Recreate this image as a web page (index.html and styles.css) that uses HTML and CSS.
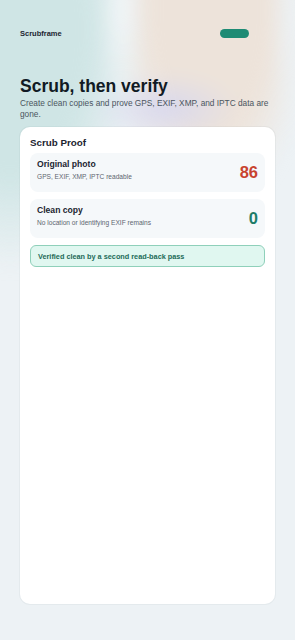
FILE: index.html
```html
<!DOCTYPE html>
<html lang="en">
<head>
  <meta charset="UTF-8">
  <meta name="viewport" content="width=device-width, initial-scale=1.0">
  <title>Scrubframe</title>
  <link rel="stylesheet" href="styles.css">
</head>
<body>
  <div class="backdrop"></div>
  <div class="app">
    <header class="top-bar">
      <span class="brand">Scrubframe</span>
      <span class="status-pill"></span>
    </header>

    <section class="hero">
      <h1>Scrub, then verify</h1>
      <p>Create clean copies and prove GPS, EXIF, XMP, and IPTC data are gone.</p>
    </section>

    <main class="card">
      <h2>Scrub Proof</h2>
      <div class="stat-row">
        <div class="stat-text">
          <div class="stat-title">Original photo</div>
          <div class="stat-sub">GPS, EXIF, XMP, IPTC readable</div>
        </div>
        <div class="stat-value bad">86</div>
      </div>
      <div class="stat-row">
        <div class="stat-text">
          <div class="stat-title">Clean copy</div>
          <div class="stat-sub">No location or identifying EXIF remains</div>
        </div>
        <div class="stat-value good">0</div>
      </div>
      <div class="verified">Verified clean by a second read-back pass</div>
    </main>
  </div>
</body>
</html>
```

FILE: styles.css
```css
body {
  margin: 0;
  height: 640px;
  overflow: hidden;
  background: #edf2f5;
  font-family: 'Liberation Sans', Arial, sans-serif;
  color: #15202b;
  position: relative;
}

/* soft colour blobs behind the header */
.backdrop {
  position: absolute;
  inset: 0;
  overflow: hidden;
}

.backdrop::before {
  content: "";
  position: absolute;
  top: -30px;
  left: -30px;
  right: -30px;
  height: 400px;
  background:
    radial-gradient(ellipse 22px 100px at 152px 40px, rgba(242, 246, 248, 1), rgba(242, 246, 248, 0) 100%),
    radial-gradient(ellipse 22px 130px at 322px 50px, rgba(236, 241, 244, 1), rgba(236, 241, 244, 0) 100%),
    radial-gradient(ellipse 75px 35px at 195px 138px, rgba(216, 216, 238, 1), rgba(216, 216, 238, 0) 100%),
    radial-gradient(ellipse 130px 240px at 40px 60px, #cfe5e5 60%, rgba(207, 229, 229, 0) 100%),
    radial-gradient(ellipse 100px 210px at 240px 40px, #ede3da 60%, rgba(237, 227, 218, 0) 100%);
  filter: blur(8px);
}

.app {
  position: relative;
  padding: 0 20px;
}

.top-bar {
  display: flex;
  justify-content: space-between;
  align-items: center;
  height: 14px;
  padding-top: 26px;
}

.brand {
  font-size: 7.5px;
  font-weight: bold;
  color: #1b2430;
}

.status-pill {
  width: 29px;
  height: 9px;
  border-radius: 5px;
  background: #1e8b74;
  margin-right: 26px;
}

.hero {
  margin-top: 36px;
}

.hero h1 {
  margin: 0;
  font-size: 17.5px;
  line-height: 21px;
  font-weight: bold;
  color: #111a24;
}

.hero p {
  margin: 1px 0 0;
  font-size: 8.3px;
  line-height: 11px;
  color: #4b5560;
}

.card {
  margin-top: 7px;
  height: 477px;
  box-sizing: border-box;
  background: #fff;
  border-radius: 10px;
  padding: 9px 10px;
  box-shadow: 0 0 0 1px rgba(20, 40, 60, 0.04);
  display: flex;
  flex-direction: column;
  gap: 7px;
}

.card h2 {
  margin: 0 0 -3px;
  font-size: 9.8px;
  line-height: 13px;
  font-weight: bold;
  color: #1b2430;
}

.stat-row {
  display: flex;
  justify-content: space-between;
  align-items: center;
  height: 39px;
  box-sizing: border-box;
  padding: 0 7px;
  background: #f5f8fa;
  border-radius: 8px;
}

.stat-text {
  margin-bottom: 6px;
}

.stat-title {
  font-size: 8.6px;
  line-height: 11px;
  font-weight: bold;
  color: #1b2430;
}

.stat-sub {
  margin-top: 2px;
  font-size: 6.6px;
  line-height: 9px;
  color: #5d6670;
}

.stat-value {
  font-size: 16.5px;
  font-weight: bold;
}

.stat-value.bad {
  color: #c8432f;
}

.stat-value.good {
  color: #1e7d69;
}

.verified {
  height: 22px;
  box-sizing: border-box;
  display: flex;
  align-items: center;
  padding: 0 7px;
  background: #e0f7f0;
  border: 1px solid #8fd0ba;
  border-radius: 6px;
  font-size: 7.3px;
  font-weight: bold;
  color: #1d6b58;
}
```
